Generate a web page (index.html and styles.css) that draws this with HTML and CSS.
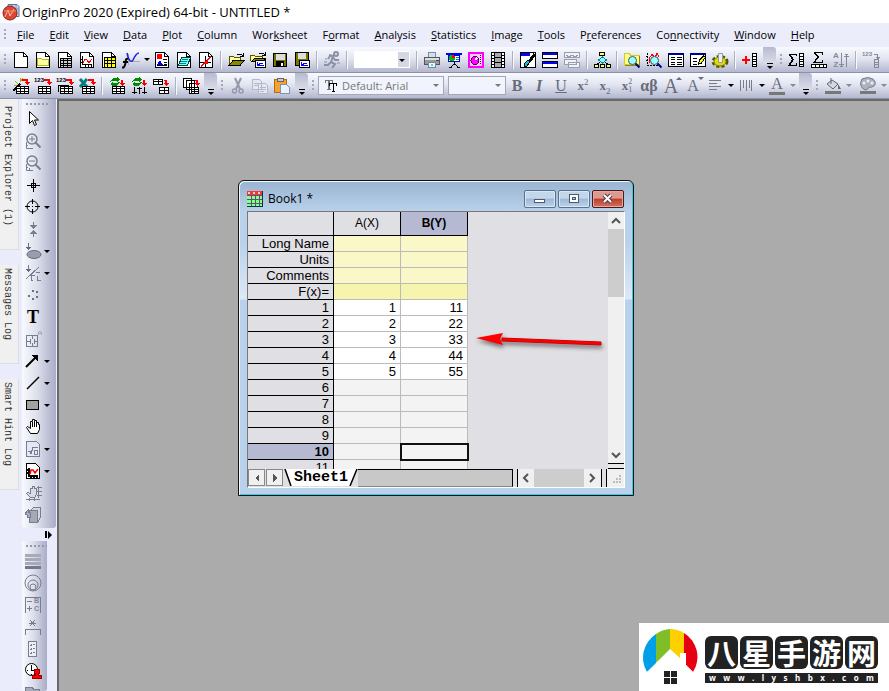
FILE: index.html
```html
<!DOCTYPE html>
<html lang="en">
<head>
<meta charset="utf-8">
<title>OriginPro 2020</title>
<link rel="stylesheet" href="styles.css">
</head>
<body>
<svg class="sprite" aria-hidden="true">
  <defs>
    <g id="sheet"><path d="M2.5 1.5h9l4 4v11h-13z" fill="#fff" stroke="#000"/><path d="M11.5 1.5v4h4" fill="none" stroke="#000"/></g>
    <g id="redarrow"><path d="M10 2h6v3h-2V4h-4z" fill="#f00"/><path d="M12 5h6l-3 3z" fill="#f00"/></g>
    <g id="minigrid"><path d="M4 9h13v8H4z" fill="#000"/><path d="M5 10h3v1H5zM9 10h3v1H9zM13 10h3v1h-3zM5 12h3v2H5zM9 12h3v2H9zM13 12h3v2h-3zM5 15h3v1H5zM9 15h3v1H9zM13 15h3v1h-3z" fill="#fff"/></g>
    <g id="mag" shape-rendering="auto"><circle cx="9.500" cy="9.500" r="4" fill="#9ff" stroke="#456"/><path d="M12.500 12.500l4 4" stroke="#008" stroke-width="2"/></g>
  </defs>
  <symbol id="new" viewBox="0 0 18 18"><use href="#sheet"/></symbol>
  <symbol id="folder" viewBox="0 0 18 18"><use href="#sheet"/><path d="M3.500 14.500v-7h4l1 1h6v6z" fill="#ffffa0" stroke="#b5b52a"/></symbol>
  <symbol id="book" viewBox="0 0 18 18"><use href="#sheet"/><path d="M4 7h12v10H4z" fill="#000"/><path d="M5 8h2v1H5zM8 8h3v1H8zM12 8h3v1h-3zM5 10h2v2H5zM8 10h3v2H8zM12 10h3v2h-3zM5 13h2v1H5zM8 13h3v1H8zM12 13h3v1h-3zM5 15h2v1H5zM8 15h3v1H8zM12 15h3v1h-3z" fill="#ccc"/></symbol>
  <symbol id="graph" viewBox="0 0 18 18"><use href="#sheet"/><path d="M4.500 5v8.500H14M3 8h1M3 11h1M7 14v2M10 14v2M13 14v2" fill="none" stroke="#000"/><path d="M5 12l2-4 2 1 2 3 3-4" fill="none" stroke="#f00"/></symbol>
  <symbol id="matrix" viewBox="0 0 18 18"><use href="#sheet"/><path d="M4 6h12v11H4z" fill="#000"/><path d="M5 7h2v2H5zM8 7h3v2H8zM12 7h3v2h-3zM5 10h2v2H5zM8 10h3v2H8zM12 10h3v2h-3zM5 13h2v3H5zM8 13h3v3H8zM12 13h3v3h-3z" fill="#ff0"/></symbol>
  <symbol id="fx" viewBox="0 0 18 18"><path d="M6.500 14V3M3 10.500h15" stroke="#aab" fill="none"/><path d="M5 2c2 10 5 9 6 7s3-7 6-7" stroke="#22d" stroke-width="1.500" fill="none" shape-rendering="auto"/><path d="M6 8c-3-1-2 3-3 6s-2 3-3 2M1 11h5" stroke="#000" stroke-width="2" fill="none" shape-rendering="auto"/></symbol>
  <symbol id="layout" viewBox="0 0 18 18"><use href="#sheet"/><path d="M4 3h5v5H4z" fill="#f00"/><path d="M10 8h4v1h-4zM11 11h3v1h-3zM11 13h3v1h-3zM4 14h10v1H4z" fill="#000"/><path d="M4 14l3-5 3 5z" fill="#00f"/></symbol>
  <symbol id="notes" viewBox="0 0 18 18"><use href="#sheet"/><path d="M6.500 6.500h9l-3 8h-9z" fill="#7ff" stroke="#044"/><path d="M7 8.500h6M6 10.500h6M5 12.500h6" stroke="#088"/></symbol>
  <symbol id="cross" viewBox="0 0 18 18"><use href="#sheet"/><path d="M8.500 5v11M3 11.500h11" stroke="#000"/><path d="M4 15L14 6" stroke="#f00" stroke-width="1.500"/><path d="M8 10h3v3H8z" fill="#f00"/></symbol>
  <symbol id="open" viewBox="0 0 18 18"><path d="M2.500 14V5.500h4l1 1h6v3" fill="#ff9" stroke="#550"/><path d="M2 14.500l4-5h11l-4 5z" fill="#880" stroke="#000"/><path d="M10 3h4l2 2M16 2v3h-3" fill="none" stroke="#000"/></symbol>
  <symbol id="open2" viewBox="0 0 18 18"><path d="M1.500 10V4.500h4l1 1h7v3" fill="#ff9" stroke="#550"/><path d="M3 10l3-3h11l-2 3z" fill="#880" stroke="#000"/><path d="M10 2h4l2 2M16 1v3h-3" fill="none" stroke="#000"/><path d="M6.500 9.500h10v7h-10z" fill="#fff" stroke="#000"/><path d="M8.500 11v3.500H15M9 14l3-2 2 1" stroke="#00f" fill="none"/></symbol>
  <symbol id="save" viewBox="0 0 18 18"><path d="M2.500 2.500h13v13h-13z" fill="#770" stroke="#000"/><path d="M5 3h9v6H5z" fill="#ddd"/><path d="M5 10h8v5H5z" fill="#000"/><path d="M10 12h2v3h-2z" fill="#fff"/></symbol>
  <symbol id="save2" viewBox="0 0 18 18"><path d="M2.500 1.500h13v13h-13z" fill="#770" stroke="#000"/><path d="M5 2h8v6H5z" fill="#ddd"/><path d="M6.500 9.500h10v7h-10z" fill="#fff" stroke="#000"/><path d="M8.500 11v3.500H15M9 14l3-2 2 1" stroke="#00f" fill="none"/></symbol>
  <symbol id="run" viewBox="0 0 18 18"><g fill="none" stroke="#8b90a3" stroke-width="2" shape-rendering="auto"><path d="M6 4l4 1-2 6 4 2-3 4M8 11l-3 3H1M5 8l2-3M10 6l2 3h4"/><circle cx="13" cy="3" r="2"/><path d="M2 8h2M1 11h3M14 12h3" stroke-width="1"/></g></symbol>
  <symbol id="print" viewBox="0 0 18 18"><path d="M5.500 1.500h7v6h-7z" fill="#c4e4f4" stroke="#889"/><path d="M1.500 6.500h15v7h-15z" fill="#999" stroke="#555"/><path d="M2 7h14v2H2z" fill="#ddd"/><path d="M5.500 11.500h7v5h-7z" fill="#eef8fc" stroke="#789"/><path d="M8 13h2v2H8z" fill="#5cf"/><path d="M13 9h3v1h-3z" fill="#444"/></symbol>
  <symbol id="present" viewBox="0 0 18 18"><path d="M1 2h16v2H1z" fill="#00f"/><path d="M3.500 4.500h11v6h-11z" fill="#fff" stroke="#00c"/><circle cx="7" cy="7" r="3" fill="#0b0"/><path d="M7 4v3h3a3 3 0 0 0-3-3" fill="#f00"/><path d="M11 6h3v1h-3zM11 8h3v1h-3z" fill="#088"/><path d="M9.500 11v3M9 13l-3 3M10 13l3 3M4 16.500h3M12 16.500h3" stroke="#000"/></symbol>
  <symbol id="project" viewBox="0 0 18 18"><path d="M2 2h14v14H2z" fill="#fcf" stroke="#f0f" stroke-width="2"/><circle cx="8" cy="9.500" r="4" fill="#f0f" stroke="#505"/><path d="M8 9l3-1-2-3z" fill="#fff"/><path d="M13.500 4v9" stroke="#505" stroke-dasharray="1 1"/></symbol>
  <symbol id="film" viewBox="0 0 18 18"><path d="M2 1h14v16H2z" fill="#000"/><path d="M6 2h6v4H6zM6 7h6v4H6zM6 12h6v4H6z" fill="#aaa"/><path d="M4 2v15M14 2v15" stroke="#fff" stroke-width="2" stroke-dasharray="2 1"/></symbol>
  <symbol id="edit" viewBox="0 0 18 18"><path d="M1.500 1.500h15v15h-15z" fill="#fff" stroke="#000"/><path d="M2 2h9v3H2z" fill="#00f"/><path d="M16 3l-6 8" stroke="#000" stroke-width="3"/><path d="M9 9l2 2-3 4-3 1 1-4z" fill="#0cc" stroke="#000"/></symbol>
  <symbol id="panes" viewBox="0 0 18 18"><path d="M1.500 1.500h15v6h-15zM1.500 10.500h15v6h-15z" fill="#fff" stroke="#000"/><path d="M2 2h14v2H2zM2 11h14v2H2z" fill="#00f"/></symbol>
  <symbol id="paneg" viewBox="0 0 18 18"><path d="M1.500 1.500h15v5h-15zM1.500 8.500h12v5h-12zM5.500 11.500h11v5h-11z" fill="#f0f2f8" stroke="#999eaf"/><path d="M3 4l3 2 3-2 3 2 3-2" stroke="#999eaf" fill="none"/></symbol>
  <symbol id="tree" viewBox="0 0 18 18"><path d="M9.500 4v9M9 10l-5 3M10 10l5 3" stroke="#000"/><path d="M6.500 1.500h5v3h-5zM1.500 13.500h4v3h-4zM7.500 13.500h4v3h-4zM13.500 13.500h4v3h-4z" fill="#ff6" stroke="#000"/><path d="M9.500 6l4 3-4 3-4-3z" fill="#8ff" stroke="#088"/></symbol>
  <symbol id="find" viewBox="0 0 18 18"><path d="M1.500 13.500v-11h5l1 2h9v9z" fill="#ff8" stroke="#cc3"/><path d="M2 14.500h14.500V5" fill="none" stroke="#880"/><use href="#mag"/></symbol>
  <symbol id="findg" viewBox="0 0 18 18"><path d="M2.500 2v12.500H15M1 5h2M1 9h2" fill="none" stroke="#000" stroke-dasharray="2 1"/><path d="M4 12V8l3-5 3 4 2-5 2 4" fill="none" stroke="#f00"/><use href="#mag"/></symbol>
  <symbol id="rows" viewBox="0 0 18 18"><path d="M1.500 2.500h15v13h-15z" fill="#fff" stroke="#000"/><path d="M1 2h16v2H1z" fill="#008"/><path d="M4 6.500h4M10 6.500h5M4 8.500h4M10 8.500h5M4 11.500h4M10 11.500h5M4 13.500h4M10 13.500h5" stroke="#000"/></symbol>
  <symbol id="rowpen" viewBox="0 0 18 18"><path d="M1.500 2.500h15v13h-15z" fill="#fff" stroke="#000"/><path d="M1 2h16v2H1z" fill="#008"/><path d="M4 7.500h4M4 10.500h4M4 13.500h4" stroke="#000"/><path d="M9.500 13l1-4 4-4 2 1-4 6z" fill="#ff0" stroke="#000"/></symbol>
  <symbol id="gear" viewBox="0 0 18 18"><g shape-rendering="auto"><ellipse cx="9" cy="10.500" rx="7" ry="5" fill="none" stroke="#550" stroke-width="3" stroke-dasharray="3 2"/><ellipse cx="9" cy="10.500" rx="6" ry="4.500" fill="#dd0" stroke="#770"/><path d="M7.500 2.500h4v9h-4z" fill="#eee" stroke="#999"/></g></symbol>
  <g id="column"><path d="M11.500 2.500h4v13h-4z" fill="#fff" stroke="currentColor"/><path d="M12 5.500h3M12 8.500h3M12 10.500h3M12 13.500h3" stroke="currentColor"/></g>
  <symbol id="addcol" viewBox="0 0 18 18"><path d="M1 9h8M5 5v8" stroke="#f00" stroke-width="2"/><use href="#column"/></symbol>
  <symbol id="sumcol" viewBox="0 0 18 18"><path d="M8.500 5V3.500h-7L5 8.500l-4 6h7.500V12" fill="none" stroke="#000" stroke-width="1.500"/><use href="#column"/></symbol>
  <symbol id="sumrow" viewBox="0 0 18 18"><path d="M12.500 4V1.500h-8L8 6l-4 5.500h8.500V9" fill="none" stroke="#000" stroke-width="1.500"/><path d="M1.500 13.500h15v3h-15zM5.500 13v4M9.500 13v4M13.500 13v4" fill="#fff" stroke="#000"/></symbol>
  <symbol id="sort" viewBox="0 0 18 18"><path d="M9.500 2v13M14.500 3v13M7 13h5M12 5h5M8 15h3M13 3h3" stroke="currentColor"/></symbol>
  <symbol id="numcol" viewBox="0 0 18 18"><path d="M12 3.500h3.500V6" fill="none" stroke="currentColor"/><path d="M13 6h5l-2 3z" fill="currentColor"/><path d="M12.500 8.500h4v8h-4zM12 11.500h4M12 13.500h4" fill="none" stroke="currentColor"/></symbol>
  <symbol id="wiz" viewBox="0 0 18 18"><path d="M1 14L8 7" stroke="#000" stroke-width="2"/><path d="M3 4l3 3M8 1v4M2 8h3M11 1L9 4" stroke="#aa0"/><use href="#redarrow"/><use href="#minigrid"/></symbol>
  <symbol id="imp" viewBox="0 0 18 18"><use href="#redarrow"/><use href="#minigrid"/></symbol>
  <symbol id="impm" viewBox="0 0 18 18"><path d="M2.500 15V8.500h10M4.500 8v2" stroke="#000" fill="none"/><use href="#redarrow"/><use href="#minigrid"/></symbol>
  <symbol id="xls" viewBox="0 0 18 18"><path d="M2 2l7 8M9 2L2 10" stroke="#087d7d" stroke-width="3" shape-rendering="auto"/><use href="#redarrow"/><use href="#minigrid"/></symbol>
  <symbol id="recalc" viewBox="0 0 18 18"><path d="M1 5l4-4h4V0l3 3-3 2V4H5zM12 5l-3 4H5v1L2 7l3-2v1h3z" fill="#008a00"/><path d="M13 3h2v3h-2zM11 6h6l-3 3z" fill="#f00"/><use href="#minigrid"/></symbol>
  <symbol id="recalc2" viewBox="0 0 18 18"><path d="M1 5l4-4h4V0l3 3-3 2V4H5zM12 5l-3 4H5v1L2 7l3-2v1h3z" fill="#008a00"/><path d="M13 3h2v3h-2zM11 6h6l-3 3z" fill="#f00"/><path d="M4.500 10v7M9.500 10v7M14.500 10v7M2 15.500h5M7 11.500h5M12 15.500h5" stroke="#000"/></symbol>
  <symbol id="dup" viewBox="0 0 18 18"><path d="M1 2h10v6H1zM7 10h10v7H7z" fill="#000"/><path d="M2 3h4v1H2zM7 3h3v1H7zM2 5h4v2H2zM7 5h3v2H7zM8 11h4v2H8zM13 11h3v2h-3zM8 14h4v2H8zM13 14h3v2h-3z" fill="#fff"/><path d="M12 3h3v3h-2V4h-1zM12 6h5l-3 3z" fill="#f00"/></symbol>
  <symbol id="batch" viewBox="0 0 18 18"><path d="M1.500 1.500h8v9h-8zM4.500 3.500h8v9h-8zM7.500 6.500h8v10h-8z" fill="#fff" stroke="#000"/><path d="M13 3h3v3h-2V4h-1zM12 6h6l-3 3z" fill="#f00"/><path d="M9 10h8v7H9z" fill="#000"/><path d="M10 11h2v1h-2zM13 11h3v1h-3zM10 13h2v1h-2zM13 13h3v1h-3zM10 15h2v1h-2zM13 15h3v1h-3z" fill="#fff"/></symbol>
  <symbol id="cut" viewBox="0 0 18 18"><g shape-rendering="auto" fill="none" stroke="#9499ab"><path d="M6 1l5 11M12 1L7 12" stroke-width="2"/><circle cx="5.500" cy="14" r="2" stroke-width="1.500"/><circle cx="12" cy="14" r="2" stroke-width="1.500"/></g></symbol>
  <symbol id="copy" viewBox="0 0 18 18"><g fill="#e4e8f3" stroke="#b4b9ca"><path d="M1.500 2.500h7l2 2v8h-9zM7.500 6.500h7l2 2v8h-9z"/><path d="M3 6.500h5M3 8.500h4M9 10.500h6M9 12.500h6M9 14.500h4"/></g></symbol>
  <symbol id="paste" viewBox="0 0 18 18"><path d="M1.500 2.500h12v13h-12z" fill="#f1a432" stroke="#b66c16"/><path d="M4.500 1.500h6v3h-6z" fill="#ccc" stroke="#666"/><path d="M7.500 7.500h6l3 3v6h-9z" fill="#eaf2ff" stroke="#8292b0"/></symbol>
  <symbol id="align" viewBox="0 0 18 18"><path d="M3 3.500h12M3 6.500h8M3 9.500h12M3 12.500h8" stroke="#777b8b"/></symbol>
  <symbol id="bars" viewBox="0 0 18 18"><path d="M3.500 3v11M6.500 3v8M9.500 3v11M12.500 3v8M14.500 3v11" stroke="#777b8b"/></symbol>
  <symbol id="bucket" viewBox="0 0 18 18"><g shape-rendering="auto"><path d="M7 1v6M3 7l5-4 6 4-5 5z" fill="#d4d8e2" stroke="#5f6474"/><path d="M14 7l3 5h-3z" fill="#667"/></g><path d="M1 14h16v3H1z" fill="#777"/></symbol>
  <symbol id="palette" viewBox="0 0 18 18"><g shape-rendering="auto"><path d="M3 2q6-3 11 0 4 4 1 7-3 2-5 1-1 3-4 3-7-4-3-11z" fill="#adb2c1" stroke="#777b8b"/><circle cx="5" cy="6" r="1.500" fill="#eee"/><circle cx="9" cy="4" r="1.500" fill="#eee"/><circle cx="13" cy="6" r="1.500" fill="#eee"/></g><path d="M1 14h16v3H1z" fill="#777"/></symbol>
  <symbol id="pointer" viewBox="0 0 18 18"><path d="M5.500 1.500v12l3-3 2 5 2-1-2-4.500h4z" fill="#fff" stroke="#000" shape-rendering="auto"/></symbol>
  <symbol id="zin" viewBox="0 0 18 18"><g fill="none" stroke="#777e90" shape-rendering="auto"><circle cx="8" cy="7" r="5" stroke-width="1.500"/><path d="M5 7h6M8 4v6"/><path d="M11.500 10.500l5 5" stroke-width="2"/><path d="M2.500 10v6.500H9M2 13.500h2" /></g></symbol>
  <symbol id="zout" viewBox="0 0 18 18"><g fill="none" stroke="#777e90" shape-rendering="auto"><circle cx="8" cy="7" r="5" stroke-width="1.500"/><path d="M5 7h6"/><path d="M11.500 10.500l5 5" stroke-width="2"/><path d="M2.500 10v6.500H9M2 13.500h2M5.500 16v-2" /></g></symbol>
  <symbol id="reader" viewBox="0 0 18 18"><path d="M9.500 3v13M3 9.500h13M7.500 7.500h4v4h-4z" stroke="#000" fill="none"/></symbol>
  <symbol id="target" viewBox="0 0 18 18"><g shape-rendering="auto" stroke="#000" fill="none"><circle cx="8.500" cy="8.500" r="5.500"/><path d="M8.500 1v5M8.500 11v5M1 8.500h5M11 8.500h5M8 8.500h1"/></g></symbol>
  <symbol id="selector" viewBox="0 0 18 18"><path d="M9.500 2v3M9.500 14v3" stroke="#777e90"/><path d="M6 5h7L9.500 9zM6 14h7l-3.500-4z" fill="#777e90"/></symbol>
  <symbol id="region" viewBox="0 0 18 18"><ellipse cx="10" cy="12.500" rx="7" ry="4" fill="#999eae" stroke="#666c7d" shape-rendering="auto"/><path d="M4.500 1v5" stroke="#666c7d"/><path d="M1 5h7L4.500 8z" fill="#666c7d"/></symbol>
  <symbol id="mask" viewBox="0 0 18 18"><path d="M4.500 1v5M2 15l13-12M7.500 16v-5h3M12 8.500h4M13.500 12v4h3M7 16.500h2" stroke="#777e90" fill="none"/><path d="M1 5h7L4.500 8z" fill="#666c7d"/></symbol>
  <symbol id="dots" viewBox="0 0 18 18"><path d="M8 4h2v2H8zM12 5h2v2h-2zM4 9h2v2H4zM12 10h2v2h-2zM8 12h2v2H8z" fill="#667084"/></symbol>
  <symbol id="insert" viewBox="0 0 18 18"><path d="M2.500 5.500h11v11h-11zM8.500 5v4M8.500 13v4M2 11.500h4M10 11.500h4M6.500 9v5M10.500 9v5" fill="none" stroke="#777e90"/><path d="M14.500 5V2.500l1-1h1l1 1V5M14 3.500h4" fill="none" stroke="#a4a9b8"/></symbol>
  <symbol id="arrow" viewBox="0 0 18 18"><path d="M2 15L12 5" stroke="#000" stroke-width="2" shape-rendering="auto"/><path d="M7 3h7v7z" fill="#000"/></symbol>
  <symbol id="line" viewBox="0 0 18 18"><path d="M3 15L15 3" stroke="#000" stroke-width="1.500" shape-rendering="auto"/></symbol>
  <symbol id="rect" viewBox="0 0 18 18"><path d="M2.500 4.500h12v9h-12z" fill="#a1a1a1" stroke="#000"/></symbol>
  <symbol id="hand" viewBox="0 0 18 18"><path d="M6.500 15.500l-4-6 1-1 3 2v-7h2v-2h2v1h2v2h2v2h1v5l-2 4z" fill="#fff" stroke="#000" shape-rendering="auto"/><path d="M8.500 4v5M10.500 3v6M12.500 4v5" stroke="#000"/></symbol>
  <symbol id="equation" viewBox="0 0 18 18"><path d="M2.500 1.500h10l3 3v12h-13z" fill="#e3e8f3" stroke="#777e90"/><path d="M4 11h2l1 3 2-7h5M10 10h3v4h-3z" fill="none" stroke="#777e90"/></symbol>
  <symbol id="plot" viewBox="0 0 18 18"><path d="M2.500 1.500h9l4 4v11h-13z" fill="#fff" stroke="#000"/><path d="M5 6v8h9M3 8h2M3 11h2M7 14v2M10 14v2M13 14v2" stroke="#000" fill="none" stroke-width="1.500"/><path d="M6 12l1-4h2l2 3 3-4" stroke="#f00" fill="none" stroke-width="1.500" shape-rendering="auto"/></symbol>
  <symbol id="pan" viewBox="0 0 18 18"><path d="M6.500 13.500l-4-4 1-1 3 1v-5h2v-2h2v2h2v6l-2 3z" fill="#d9ddea" stroke="#777e90"/><path d="M14.500 2v12M13 3.500h5M13 7.500h5M13 11.500h5M2 15.500h14M5.500 14v3M10.500 14v3" stroke="#777e90"/></symbol>
  <symbol id="cube" viewBox="0 0 18 18"><path d="M6.500 4.500l3-3h7v10l-3 5z" fill="#d4d7e1" stroke="#777e90"/><path d="M5.500 4.500h8v12h-8z" fill="#a4a9b8" stroke="#777e90"/><path d="M6 11H3V9L1 8l3-4v2h2z" fill="#a4a9b8" stroke="#777e90"/></symbol>
  <symbol id="stripes" viewBox="0 0 18 18"><path d="M1 2h16v3H1zM1 6h16v3H1zM1 10h16v3H1z" fill="#a5abb9"/><path d="M1 14h16v3H1z" fill="#73798a"/></symbol>
  <symbol id="rings" viewBox="0 0 18 18"><g fill="none" stroke="#777e90" shape-rendering="auto"><circle cx="9" cy="9" r="8"/><circle cx="9" cy="11" r="5"/><circle cx="9" cy="13" r="3"/></g></symbol>
  <symbol id="bc" viewBox="0 0 18 18"><path d="M1.500 17V1.500h15V17M3 5.500h5M3 12.500h5M5.500 10v5" fill="none" stroke="#777e90"/></symbol>
  <symbol id="star" viewBox="0 0 18 18"><path d="M5 5.500h7M6 2l5 6M11 2L6 8M1.500 17v-5.500h15V17" fill="none" stroke="#777e90"/></symbol>
  <symbol id="points" viewBox="0 0 18 18"><path d="M4.500 1.500h8v15h-8z" fill="#edf0f7" stroke="#777e90"/><path d="M6 5.500h2M9 4.500h2M6 9.500h2M9 8.500h2M6 13.500h2M9 12.500h2M7.500 4v2M7.500 8v2M7.500 12v2" stroke="#777e90"/></symbol>
  <symbol id="stamp" viewBox="0 0 18 18"><circle cx="7.500" cy="7.500" r="6" fill="#fff" stroke="#000" shape-rendering="auto"/><path d="M7.500 3v5H11M3 8.500h1M7.500 12v1" stroke="#000" fill="none"/><path d="M10 7h5v4h-1v2h3v3H8v-3h3v-2h-1z" fill="#f00" stroke="#900"/></symbol>
  <symbol id="dir" viewBox="0 0 18 18"><path d="M1.500 17V3.500h7l1 2h6V17" fill="#a5abb9" stroke="#777e90"/></symbol>
</svg>

<div class="app">
  <header class="titlebar">
    <svg class="applogo" viewBox="0 0 18 18" aria-hidden="true"><path d="M6 1.500h9l2 2v10H6z" fill="#cad7ee" stroke="#56719c"/><path d="M10 2v11M14 2v11M6 6h11" stroke="#7e96c2"/><circle cx="8" cy="10" r="7" fill="#dc4632" stroke="#8f2118"/><path d="M3 14l3-7 2 6 4-7" fill="none" stroke="#ffb5a7"/><path d="M2 8h12" stroke="#ee8c78"/></svg>
    <h1>OriginPro 2020 (Expired) 64-bit - UNTITLED *</h1>
  </header>
  <nav class="menubar" aria-label="Main menu">
    <i class="grip"></i>
    <button><u>F</u>ile</button><button><u>E</u>dit</button><button><u>V</u>iew</button><button><u>D</u>ata</button><button><u>P</u>lot</button><button><u>C</u>olumn</button><button>Wor<u>k</u>sheet</button><button>F<u>o</u>rmat</button><button><u>A</u>nalysis</button><button><u>S</u>tatistics</button><button><u>I</u>mage</button><button><u>T</u>ools</button><button>P<u>r</u>eferences</button><button>Co<u>n</u>nectivity</button><button><u>W</u>indow</button><button><u>H</u>elp</button>
  </nav>

  <div class="toolbar" role="toolbar" aria-label="Standard">
    <i class="grip"></i>
    <button aria-label="New project"><svg><use href="#new"/></svg></button>
    <button aria-label="New folder"><svg><use href="#folder"/></svg></button>
    <button aria-label="New workbook"><svg><use href="#book"/></svg></button>
    <button aria-label="New graph"><svg><use href="#graph"/></svg></button>
    <button aria-label="New matrix"><svg><use href="#matrix"/></svg></button>
    <button aria-label="New function plot"><svg><use href="#fx"/></svg></button>
    <button class="caret" aria-label="Function plot types"></button>
    <button aria-label="New layout"><svg><use href="#layout"/></svg></button>
    <button aria-label="New notes"><svg><use href="#notes"/></svg></button>
    <button aria-label="Digitize image"><svg><use href="#cross"/></svg></button>
    <i class="sep"></i>
    <button aria-label="Open"><svg><use href="#open"/></svg></button>
    <button aria-label="Open template"><svg><use href="#open2"/></svg></button>
    <button aria-label="Save project"><svg><use href="#save"/></svg></button>
    <button aria-label="Save template"><svg><use href="#save2"/></svg></button>
    <i class="sep"></i>
    <button aria-label="Run"><svg><use href="#run"/></svg></button>
    <i class="sep"></i>
    <span class="combo zoom"><select aria-label="Zoom"><option></option></select></span>
    <i class="sep"></i>
    <button aria-label="Print"><svg><use href="#print"/></svg></button>
    <button aria-label="Slide show"><svg><use href="#present"/></svg></button>
    <button aria-label="Send to presentation"><svg><use href="#project"/></svg></button>
    <button aria-label="Video builder"><svg><use href="#film"/></svg></button>
    <i class="sep"></i>
    <button aria-label="Script window"><svg><use href="#edit"/></svg></button>
    <button aria-label="Split"><svg><use href="#panes"/></svg></button>
    <button aria-label="Duplicate"><svg><use href="#paneg"/></svg></button>
    <i class="sep"></i>
    <button aria-label="Project tree"><svg><use href="#tree"/></svg></button>
    <i class="sep"></i>
    <button aria-label="Find project"><svg><use href="#find"/></svg></button>
    <button aria-label="Find graph"><svg><use href="#findg"/></svg></button>
    <button aria-label="Results log"><svg><use href="#rows"/></svg></button>
    <button aria-label="Command window"><svg><use href="#rowpen"/></svg></button>
    <button aria-label="Code builder"><svg><use href="#gear"/></svg></button>
    <i class="sep"></i>
    <button aria-label="Add column"><svg><use href="#addcol"/></svg></button>
    <button class="more" aria-label="More standard buttons"></button>
    <i class="grip"></i>
    <button aria-label="Column statistics"><svg><use href="#sumcol"/></svg></button>
    <button aria-label="Row statistics"><svg><use href="#sumrow"/></svg></button>
    <button class="dim" aria-label="Sort"><svg><use href="#sort"/></svg><span class="az">A<br>Z</span></button>
    <i class="sep"></i>
    <button class="dim" aria-label="Set values"><svg><use href="#numcol"/></svg><span class="num">123</span></button>
  </div>

  <div class="toolbar" role="toolbar" aria-label="Import and format">
    <i class="grip"></i>
    <button aria-label="Import wizard"><svg><use href="#wiz"/></svg></button>
    <button aria-label="Import ASCII"><svg><use href="#imp"/></svg><span class="num">123</span></button>
    <button aria-label="Import multiple ASCII"><svg><use href="#impm"/></svg><span class="num">123</span></button>
    <button aria-label="Import Excel"><svg><use href="#xls"/></svg></button>
    <i class="sep"></i>
    <button aria-label="Re-import"><svg><use href="#recalc"/></svg></button>
    <button aria-label="Recalculate"><svg><use href="#recalc2"/></svg></button>
    <button aria-label="Clone import"><svg><use href="#dup"/></svg></button>
    <i class="sep"></i>
    <button aria-label="Batch processing"><svg><use href="#batch"/></svg></button>
    <button class="more" aria-label="More import buttons"></button>
    <i class="grip"></i>
    <button aria-label="Cut"><svg><use href="#cut"/></svg></button>
    <button aria-label="Copy"><svg><use href="#copy"/></svg></button>
    <button aria-label="Paste"><svg><use href="#paste"/></svg></button>
    <button class="more" aria-label="More edit buttons"></button>
    <i class="grip"></i>
    <span class="combo font"><svg viewBox="0 0 14 14" aria-hidden="true"><path d="M1 1h8v3H8V2H6v8h1v1H3v-1h1V2H2v2H1z" fill="#777"/><path d="M5 4h8v3h-1V5h-2v7h1v1H8v-1h1V5H6v2H5z" fill="#000"/></svg><select aria-label="Font"><option>Default: Arial</option></select></span>
    <span class="combo size"><select aria-label="Font size"><option></option></select></span>
    <button class="fmt" aria-label="Bold"><b>B</b></button>
    <button class="fmt" aria-label="Italic"><b><em>I</em></b></button>
    <button class="fmt" aria-label="Underline"><u>U</u></button>
    <button class="fmt small" aria-label="Superscript"><span>x<sup>2</sup></span></button>
    <button class="fmt small" aria-label="Subscript"><span>x<sub>2</sub></span></button>
    <button class="fmt small" aria-label="Super and subscript"><span>x</span><span class="pair">2<br>1</span></button>
    <button class="fmt" aria-label="Greek"><b>αβ</b></button>
    <button class="fmt big up" aria-label="Increase font">A</button>
    <button class="fmt down" aria-label="Decrease font">A</button>
    <button aria-label="Alignment"><svg><use href="#align"/></svg></button>
    <button class="caret" aria-label="Alignment options"></button>
    <button aria-label="Line style"><svg><use href="#bars"/></svg></button>
    <button class="caret" aria-label="Line style options"></button>
    <button class="fmt ink" aria-label="Font color">A</button>
    <button class="caret dim" aria-label="Font color options"></button>
    <button class="more" aria-label="More format buttons"></button>
    <i class="grip"></i>
    <button aria-label="Fill color"><svg><use href="#bucket"/></svg></button>
    <button class="caret dim" aria-label="Fill color options"></button>
    <i class="gap"></i>
    <button aria-label="Palette"><svg><use href="#palette"/></svg></button>
    <button class="caret dim" aria-label="Palette options"></button>
  </div>

  <div class="main">
    <div class="dock">
      <button>Project Explorer (1)</button>
      <button class="short">Messages Log</button>
      <button class="mid">Smart Hint Log</button>
    </div>
    <div class="tools">
      <div class="strip" role="toolbar" aria-label="Tools">
        <i class="hgrip"></i>
        <div><button aria-label="Pointer"><svg><use href="#pointer"/></svg></button></div>
        <div><button aria-label="Zoom in"><svg><use href="#zin"/></svg></button></div>
        <div><button aria-label="Zoom out"><svg><use href="#zout"/></svg></button></div>
        <div><button aria-label="Screen reader"><svg><use href="#reader"/></svg></button></div>
        <div><button aria-label="Data reader"><svg><use href="#target"/></svg></button><i class="caret"></i></div>
        <div><button aria-label="Data selector"><svg><use href="#selector"/></svg></button></div>
        <div><button aria-label="Region selection"><svg><use href="#region"/></svg></button><i class="caret"></i></div>
        <div><button aria-label="Mask points"><svg><use href="#mask"/></svg></button><i class="caret"></i></div>
        <div><button aria-label="Draw data"><svg><use href="#dots"/></svg></button></div>
        <div><button class="text" aria-label="Text">T</button></div>
        <div><button aria-label="Insert object"><svg><use href="#insert"/></svg></button></div>
        <div><button aria-label="Arrow"><svg><use href="#arrow"/></svg></button><i class="caret"></i></div>
        <div><button aria-label="Line"><svg><use href="#line"/></svg></button><i class="caret"></i></div>
        <div><button aria-label="Rectangle"><svg><use href="#rect"/></svg></button><i class="caret"></i></div>
        <div><button aria-label="Pan"><svg><use href="#hand"/></svg></button></div>
        <div><button aria-label="Equation"><svg><use href="#equation"/></svg></button><i class="caret"></i></div>
        <div><button aria-label="Insert graph"><svg><use href="#plot"/></svg></button><i class="caret"></i></div>
        <div><button aria-label="Rescale"><svg><use href="#pan"/></svg></button></div>
        <div><button aria-label="Rotate"><svg><use href="#cube"/></svg></button></div>
      </div>
      <button class="expand" aria-label="Expand toolbar"></button>
      <div class="strip narrow" role="toolbar" aria-label="Graph tools">
        <i class="hgrip"></i>
        <button aria-label="Color scale"><svg><use href="#stripes"/></svg></button>
        <button aria-label="Bubble scale"><svg><use href="#rings"/></svg></button>
        <button class="dim" aria-label="Legend"><svg><use href="#bc"/></svg><span class="bc">B<br>C</span></button>
        <button aria-label="Asterisk bracket"><svg><use href="#star"/></svg></button>
        <button aria-label="New table"><svg><use href="#points"/></svg></button>
        <button aria-label="Date and time"><svg><use href="#stamp"/></svg></button>
        <button aria-label="Project path"><svg><use href="#dir"/></svg></button>
      </div>
    </div>

    <main class="desktop">
      <section class="window" aria-label="Book1">
        <div class="caption">
          <svg class="bookicon" viewBox="0 0 16 16" aria-hidden="true"><path d="M0 0h16v16H0z" fill="#134"/><path d="M0 0h15v4H0z" fill="#f33"/><path d="M0 4h15v11H0z" fill="#8f8"/><path d="M0 4.500h15M0 8.500h15M0 12.500h15M4.500 4v11M8.500 4v11M12.500 4v11" stroke="#557"/><path d="M1 1h2v2H1zM6 1h2v2H6zM11 1h2v2h-2z" fill="#fcc"/></svg>
          <h2>Book1 *</h2>
          <button aria-label="Minimize"><svg viewBox="0 0 14 12"><path d="M1.500 6.500h10v3h-10z" fill="#fff" stroke="#4b5a70"/></svg></button>
          <button aria-label="Restore"><svg viewBox="0 0 14 12"><path d="M2.500 1.500h9v8h-9z" fill="#fff" stroke="#4b5a70"/><path d="M5.500 4.500h3v2h-3z" fill="#acd" stroke="#4b5a70"/></svg></button>
          <button class="close" aria-label="Close"><svg viewBox="0 0 14 12"><path d="M3 2l7 7M10 2L3 9" stroke="#4a3b4c" stroke-width="4"/><path d="M3 2l7 7M10 2L3 9" stroke="#fff" stroke-width="2"/></svg></button>
        </div>
        <div class="client">
          <div class="view">
            <div class="sheetarea">
              <table>
                <thead><tr><th></th><th>A(X)</th><th class="on">B(Y)</th></tr></thead>
                <tbody>
                  <tr class="label"><th>Long Name</th><td></td><td></td></tr>
                  <tr class="label"><th>Units</th><td></td><td></td></tr>
                  <tr class="label"><th>Comments</th><td></td><td></td></tr>
                  <tr class="label formula"><th>F(x)=</th><td></td><td></td></tr>
                  <tr class="data"><th>1</th><td>1</td><td>11</td></tr>
                  <tr class="data"><th>2</th><td>2</td><td>22</td></tr>
                  <tr class="data"><th>3</th><td>3</td><td>33</td></tr>
                  <tr class="data"><th>4</th><td>4</td><td>44</td></tr>
                  <tr class="data"><th>5</th><td>5</td><td>55</td></tr>
                  <tr><th>6</th><td></td><td></td></tr>
                  <tr><th>7</th><td></td><td></td></tr>
                  <tr><th>8</th><td></td><td></td></tr>
                  <tr><th>9</th><td></td><td></td></tr>
                  <tr><th class="on">10</th><td></td><td class="cursor"></td></tr>
                  <tr><th>11</th><td></td><td></td></tr>
                </tbody>
              </table>
            </div>
            <div class="vscroll">
              <button aria-label="Scroll up"><svg viewBox="0 0 16 16"><path d="M4 10l4-4 4 4" /></svg></button>
              <i class="thumb"></i>
              <button class="end" aria-label="Scroll down"><svg viewBox="0 0 16 16"><path d="M4 6l4 4 4-4"/></svg></button>
              <i class="split"></i>
            </div>
          </div>
          <div class="tabs">
            <button class="step" aria-label="Previous sheet"><svg viewBox="0 0 16 16"><path d="M10 4v8L6 8z"/></svg></button>
            <button class="step" aria-label="Next sheet"><svg viewBox="0 0 16 16"><path d="M6 4v8l4-4z"/></svg></button>
            <button class="tab"><svg viewBox="0 0 74 17" aria-hidden="true"><path d="M1 0h72l-7 17H7z" fill="#fff"/><path d="M1 0l6 17M73 0l-7 17" stroke="#000" stroke-width="1.500"/></svg><span>Sheet1</span></button>
            <div class="track"></div>
            <div class="hscroll">
              <button aria-label="Scroll left"><svg viewBox="0 0 16 16"><path d="M10 4L6 8l4 4"/></svg></button>
              <i class="thumb"></i>
              <button aria-label="Scroll right"><svg viewBox="0 0 16 16"><path d="M6 4l4 4-4 4"/></svg></button>
            </div>
            <div class="size"><svg viewBox="0 0 16 16" aria-hidden="true"><path d="M12 6h2v2h-2zM9 9h2v2H9zM12 9h2v2h-2zM6 12h2v2H6zM9 12h2v2H9zM12 12h2v2h-2z" fill="#bbb"/></svg></div>
          </div>
        </div>
      </section>
      <svg class="pointerline" viewBox="0 0 136 26" aria-hidden="true"><path d="M26 8l99 4v3l-99-4z" fill="#f00" stroke="#c00" stroke-width="1"/><path d="M0 8l27-5-3 6 3 6z" fill="#f00"/></svg>
      <aside class="brand">
        <svg viewBox="0 0 56 56" aria-hidden="true">
          <path d="M5 43A28 28 0 0 1 14 5v30z" fill="#00a0e9"/><path d="M14 5A28 28 0 0 1 28 0v22L14 34z" fill="#7fbe26"/><path d="M28 0a28 28 0 0 1 14 4v30L28 22z" fill="#ffd000"/><path d="M42 4a28 28 0 0 1 9 39l-9-9z" fill="#e60012"/><path d="M5 43l23-23 10 9v-5h6v12l7 7v13H5z" fill="#fff"/><path d="M22 42h6v6h-6zM29 42h6v6h-6zM22 49h6v6h-6zM29 49h6v6h-6z" fill="#222"/>
        </svg>
        <div class="name">
          <p><b>八</b><b>星</b><b>手</b><b>游</b><b>网</b></p>
          <small><span>w</span><span>w</span><span>w</span><span>.</span><span>l</span><span>y</span><span>s</span><span>h</span><span>b</span><span>x</span><span>.</span><span>c</span><span>o</span><span>m</span></small>
        </div>
      </aside>
    </main>
  </div>
</div>
</body>
</html>
```
FILE: styles.css
```css
* { box-sizing: border-box; }
body { margin: 0; font-family: "Open Sans", "Noto Sans", sans-serif; font-size: 11px; color: #000; }
button { margin: 0; padding: 0; border: 0; background: none; font: inherit; color: inherit; flex: none; }
h1, h2, p { margin: 0; font-weight: normal; }
i { display: block; flex: none; }
.sprite { display: none; }
svg { display: block; flex: none; shape-rendering: crispEdges; }

.app { display: flex; flex-direction: column; height: 100vh; overflow: hidden; background: #ebecfb; }
.titlebar { display: flex; align-items: center; gap: 2px; height: 23px; flex: none; padding-left: 2px; background: #fff; }
.titlebar h1 { font-size: 13px; line-height: 20px; }
.applogo { width: 18px; height: 18px; shape-rendering: auto; }

.menubar { display: flex; align-items: center; height: 24px; flex: none; background: #ebedfb; }
.menubar button { line-height: 20px; margin-right: 15px; }
.menubar .grip { margin-right: 11px; }
.grip { width: 2px; height: 12px; margin: 0 4px; background: repeating-linear-gradient(#a5a8b8 0 2px, transparent 2px 4px); }

.toolbar { display: flex; align-items: center; height: 26px; flex: none; overflow: hidden; background: linear-gradient(#f8faff, #e3e6f1 45%, #b4b8cf); border-bottom: 1px solid #8e91a6; }
.toolbar > button { position: relative; width: 22px; height: 24px; display: flex; align-items: center; justify-content: center; }
.toolbar svg, .tools svg { width: 18px; height: 18px; }
.sep { width: 2px; height: 18px; margin: 0 3px; background: linear-gradient(90deg, #adb0bf 50%, #f8f9ff 50%); }
.caret::after { content: ""; display: block; border: 3px solid transparent; border-top-color: #000; border-bottom: 0; }
.toolbar > .caret { width: 9px; }
.gap { width: 4px; }
.dim { color: #858998; }
.dim.caret::after { border-top-color: #858998; }
.toolbar > .more { width: 13px; height: 26px; margin-left: 2px; background: linear-gradient(#b8bbd0, #d9dbe7 60%, #aeb1c9); border-radius: 0 3px 0 8px; flex-direction: column; justify-content: flex-end; padding-bottom: 4px; gap: 2px; }
.more::before { content: ""; width: 6px; height: 1px; background: #000; }
.more::after { content: ""; border: 3px solid transparent; border-top-color: #000; border-bottom: 0; }
.num, .az, .bc { position: absolute; font: bold 6px/8px "Liberation Sans", sans-serif; }
.num { left: 2px; top: 2px; }
.az { left: 3px; top: 3px; font-size: 8px; line-height: 9px; }
.bc { left: 12px; top: 3px; font-size: 7px; }

.combo { position: relative; display: flex; align-items: center; flex: none; height: 19px; background: #f1f4fc; border: 1px solid #a5a8b4; }
.combo select { appearance: none; flex: 1; min-width: 0; height: 100%; padding: 0 4px; border: 0; background: none; color: #777; font: inherit; }
.combo::after { content: ""; position: absolute; right: 4px; top: 7px; border: 3px solid transparent; border-top-color: #777; border-bottom: 0; }
.combo.zoom { width: 56px; height: 17px; margin: 0 3px; background: linear-gradient(90deg, #fff 43px, #d5d8e4 43px); border-color: #fff; }
.combo.zoom::after { border-top-color: #000; }
.combo.font { width: 126px; margin-right: 4px; padding-left: 5px; }
.combo.font svg { width: 14px; height: 14px; }
.combo.size { width: 58px; }

.toolbar > .fmt { font: 16px/20px "Liberation Serif", serif; color: #686c7c; }
.toolbar > .small { font-size: 13px; font-weight: bold; }
.fmt sup, .fmt sub { font-size: 9px; font-weight: normal; line-height: 0; }
.pair { font: 8px/8px "Liberation Serif", serif; }
.toolbar > .big { font-size: 20px; }
.up::after, .down::after { content: ""; position: absolute; right: 0; top: 3px; border: 3px solid transparent; border-bottom-color: #686c7c; border-top: 0; }
.down::after { border: 3px solid transparent; border-top-color: #686c7c; border-bottom: 0; }
.toolbar > .ink { line-height: 14px; background: linear-gradient(#777, #777) center bottom 3px / 16px 3px no-repeat; padding-bottom: 4px; }

.main { flex: 1; min-height: 0; display: flex; }
.dock { width: 19px; flex: none; display: flex; flex-direction: column; gap: 15px; }
.dock button { writing-mode: vertical-rl; display: flex; align-items: center; width: 19px; height: 151px; padding: 7px 4px 0 0; background: #f0f0f0; border: 1px solid #dcdce2; border-left: 0; border-top: 0; font: 10px/14px "Liberation Mono", monospace; color: #333; }
.dock .short { height: 99px; padding-top: 3px; }
.dock .mid { height: 111px; padding-top: 3px; }
.tools { width: 35px; margin-left: 3px; flex: none; display: flex; flex-direction: column; }
.strip { width: 34px; padding: 4px 0 2px; background: linear-gradient(90deg, #f8faff, #dcdfea 45%, #a9acc6); border-radius: 0 0 3px 3px; }
.strip div { display: flex; align-items: center; height: 22px; }
.strip button { position: relative; width: 22px; height: 22px; display: flex; align-items: center; justify-content: center; }
.strip .text { font: bold 18px/20px "Liberation Serif", serif; }
.hgrip { width: 22px; height: 2px; margin: 0 0 3px 4px; background: repeating-linear-gradient(90deg, #9699ab 0 2px, transparent 2px 4px); }
.expand { height: 13px; width: 34px; display: flex; align-items: center; justify-content: flex-end; gap: 1px; padding-right: 4px; }
.expand::before { content: ""; width: 2px; height: 7px; background: #000; }
.expand::after { content: ""; border: 4px solid transparent; border-left-color: #000; border-right: 0; }
.narrow { width: 25px; flex: 1; overflow: hidden; }

.desktop { position: relative; flex: 1; background: #ababab; border-left: 2px solid #696969; border-top: 2px solid #696969; overflow: hidden; }
.window { position: absolute; left: 179px; top: 79px; width: 396px; height: 316px; display: flex; flex-direction: column; padding: 0 8px 7px; background: linear-gradient(#99b4d1, #b9d1ea 30px, #b9d1ea 60px, #dce9f7 118px, #b9d1ea 119px); border: 1px solid #111; border-radius: 6px 6px 0 0; box-shadow: inset 1px 1px #f0f7ff, inset -1px -1px #27d1ed; }
.caption { display: flex; align-items: center; gap: 2px; height: 30px; flex: none; padding: 6px 1px 0 0; }
.bookicon { width: 16px; height: 16px; }
.caption h2 { flex: 1; padding-left: 3px; font-size: 12px; line-height: 18px; }
.caption button { display: flex; align-items: center; justify-content: center; width: 32px; height: 18px; border: 1px solid #5b7190; border-radius: 2px; background: linear-gradient(#c4d6ea 45%, #9db8d6 50%, #bcd3ea); box-shadow: inset 0 0 0 1px #d8e6f5; }
.caption button svg { width: 14px; height: 12px; }
.caption .close svg { shape-rendering: auto; }
.caption .close { border-color: #4c1822; background: linear-gradient(#dd9a90 45%, #bb3d2b 50%, #d2735f); box-shadow: inset 0 0 0 1px #e4a99f; }
.client { flex: 1; min-height: 0; display: flex; flex-direction: column; background: #e0dfe4; border: 1px solid #777; border-right-color: #fff; border-bottom-color: #fff; }
.view { flex: 1; min-height: 0; display: flex; }
.sheetarea { flex: 1; overflow: hidden; }
table { border-collapse: separate; border-spacing: 0; table-layout: fixed; width: 220px; font: 13px/15px "Liberation Sans", sans-serif; }
th { width: 86px; height: 16px; padding: 0 4px 0 0; text-align: right; font-weight: normal; background: #e0dfe4; border-right: 1px solid #000; border-bottom: 1px solid #000; }
td { padding: 0 4px 0 0; text-align: right; background: #f3f3f3; border-right: 1px solid #bbb; border-bottom: 1px solid #bbb; }
thead th { height: 24px; padding: 0; text-align: center; font-size: 12px; }
thead th + th { width: 67px; }
th.on { background: #b5bad2; font-weight: bold; }
.label td { background: #faf8c8; }
.formula td { background: #f6f4ad; }
.data td { background: #fff; }
td.cursor { outline: 2px solid #111; outline-offset: -1px; }
.vscroll { width: 16px; flex: none; display: flex; flex-direction: column; background: #f0f0f0; }
.vscroll button, .hscroll button { width: 16px; height: 17px; }
.client svg { width: 16px; height: 16px; }
.vscroll svg, .hscroll svg { fill: none; stroke: #555; stroke-width: 2; shape-rendering: auto; }
.vscroll .thumb { height: 68px; background: #cdcdcd; }
.vscroll .end { margin-top: auto; }
.split { height: 6px; border-top: 1px solid #000; border-bottom: 1px solid #000; background: #e8e8e8; }
.tabs { display: flex; height: 18px; flex: none; background: #e0dfe4; }
.step { width: 17px; height: 17px; margin-right: 1px; background: #f0f0f0; border: 1px solid #888; display: flex; align-items: center; justify-content: center; }
.step svg { fill: #555; }
.tab { position: relative; width: 74px; height: 17px; font: bold 15px/17px "Liberation Mono", monospace; }
.tabs .tab svg { position: absolute; inset: 0; width: 74px; height: 17px; shape-rendering: auto; }
.tab span { position: relative; }
.track { flex: 1; background: #c8c8c8; border: 1px solid #000; border-left: 0; border-bottom-color: #888; }
.hscroll { display: flex; margin-left: 4px; padding: 0 1px 0 0; background: #f0f0f0; border-left: 1px solid #000; border-right: 1px solid #000; }
.hscroll .thumb { width: 50px; background: #cdcdcd; }
.tabs .size { width: 18px; margin-left: 4px; border-left: 1px solid #000; background: #f0f0f0; }
.pointerline { position: absolute; left: 417px; top: 229px; width: 136px; height: 26px; shape-rendering: auto; filter: drop-shadow(1px 3px 2px rgba(0, 0, 0, .5)); }
.brand { position: absolute; right: 0; bottom: 0; width: 250px; height: 68px; display: flex; align-items: center; gap: 7px; padding-left: 3px; background: #fff; }
.brand svg { width: 56px; height: 56px; shape-rendering: auto; }
.name { padding-top: 4px; }
.name p { display: flex; gap: 2px; margin-bottom: 4px; }
.name b { display: flex; align-items: center; justify-content: center; width: 33px; height: 33px; border-radius: 6px; background: #222; color: #fff; font: bold 29px/33px "Noto Sans CJK SC", sans-serif; }
.name small { display: flex; justify-content: space-between; height: 10px; padding: 0 4px; background: #222; color: #fff; font: bold 8px/9px "Open Sans", sans-serif; }
```
